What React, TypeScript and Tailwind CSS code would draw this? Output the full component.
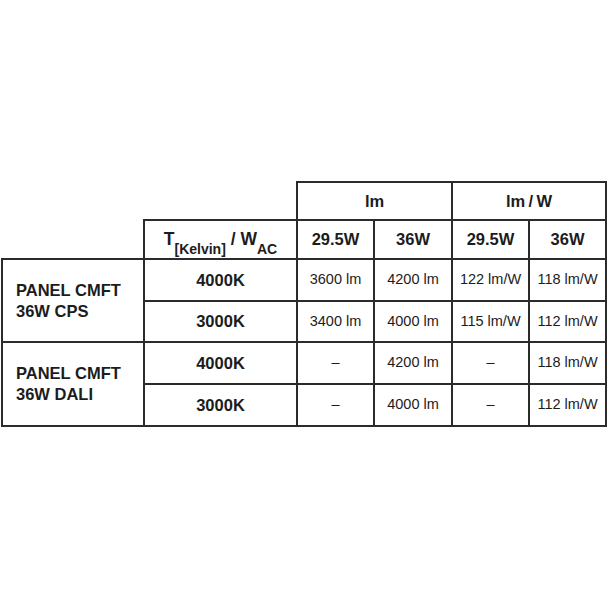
const cell = "border-2 border-[#2b2b2b] text-center align-middle";
const head = `${cell} font-bold text-[16.5px]`;
const data = `${cell} text-[14.5px]`;

const rows = [
  { group: ["PANEL CMFT", "36W CPS"], temp: "4000K", v: ["3600 lm", "4200 lm", "122 lm/W", "118 lm/W"] },
  { group: null, temp: "3000K", v: ["3400 lm", "4000 lm", "115 lm/W", "112 lm/W"] },
  { group: ["PANEL CMFT", "36W DALI"], temp: "4000K", v: ["–", "4200 lm", "–", "118 lm/W"] },
  { group: null, temp: "3000K", v: ["–", "4000 lm", "–", "112 lm/W"] },
];

const heights = ["h-[42px]", "h-[41px]", "h-[42px]", "h-[42px]"];

export default function App() {
  return (
    <div className="w-[608px] h-[608px] bg-white pt-[181px] pl-px text-[#1c1c1c] font-['Liberation_Sans',Arial,sans-serif]">
      <table className="table-fixed border-collapse w-[606px]">
        <colgroup>
          <col className="w-[142px]" />
          <col className="w-[153px]" />
          <col className="w-[77px]" />
          <col className="w-[78px]" />
          <col className="w-[77px]" />
          <col className="w-[77px]" />
        </colgroup>
        <tbody>
          <tr className="h-[38px]">
            <td rowSpan={2} />
            <td />
            <td colSpan={2} className={head}>lm</td>
            <td colSpan={2} className={head}>lm&thinsp;/&thinsp;W</td>
          </tr>
          <tr className="h-[39px]">
            <td className={`${cell} font-bold text-[17.5px]`}>
              T<sub className="text-[14px] align-[-5px]">[Kelvin]</sub> / W<sub className="text-[14px] align-[-5px]">AC</sub>
            </td>
            <td className={head}>29.5W</td>
            <td className={head}>36W</td>
            <td className={head}>29.5W</td>
            <td className={head}>36W</td>
          </tr>
          {rows.map((r, i) => (
            <tr key={i} className={heights[i]}>
              {r.group && (
                <td rowSpan={2} className={`${cell} !text-left font-bold text-[16.5px] leading-[21px] pl-[13px]`}>
                  {r.group[0]}
                  <br />
                  {r.group[1]}
                </td>
              )}
              <td className={head}>{r.temp}</td>
              {r.v.map((x, j) => (
                <td key={j} className={data}>{x}</td>
              ))}
            </tr>
          ))}
        </tbody>
      </table>
    </div>
  );
}
